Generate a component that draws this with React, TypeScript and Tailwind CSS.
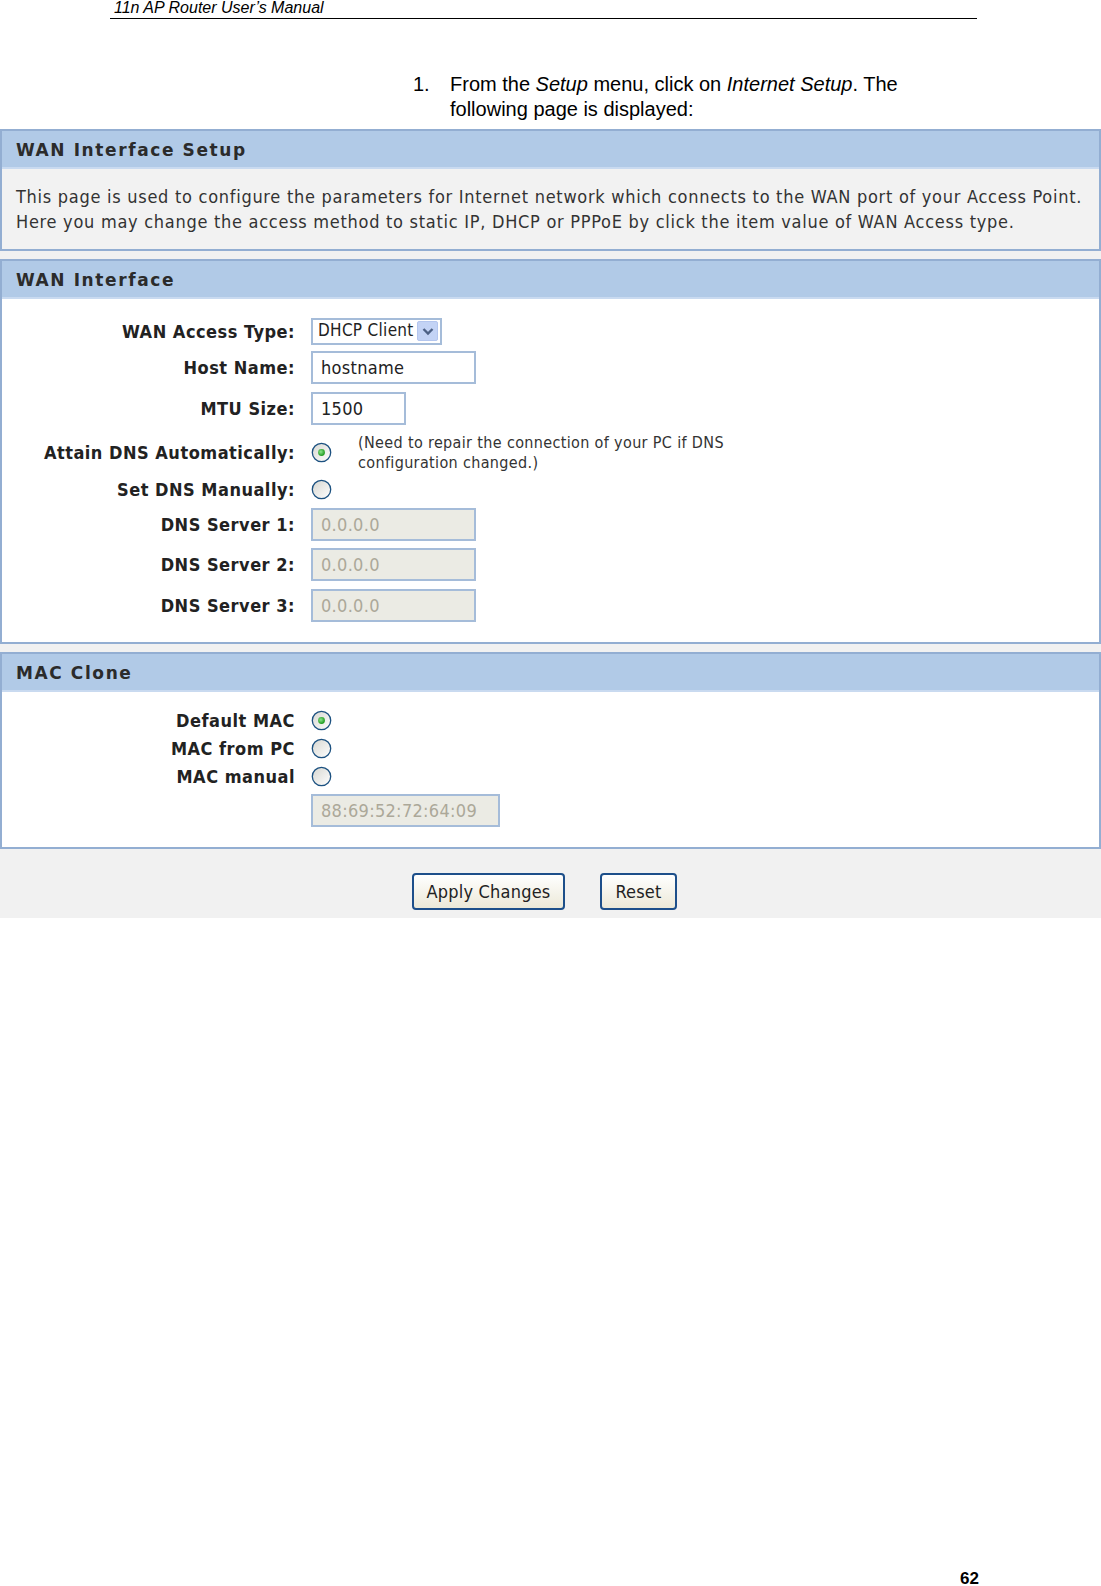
import React from "react";

const ui = "font-['DejaVu_Sans_Condensed','DejaVu_Sans',sans-serif]";

function Radio({ checked = false }: { checked?: boolean }) {
  return (
    <svg width="21" height="21" viewBox="0 0 21 21" className="shrink-0">
      <defs>
        <linearGradient id="rg" x1="0" y1="0" x2="1" y2="1">
          <stop offset="0" stopColor="#d6d6d0" />
          <stop offset="1" stopColor="#ffffff" />
        </linearGradient>
        <radialGradient id="dot" cx="0.4" cy="0.4" r="0.6">
          <stop offset="0" stopColor="#8ce58c" />
          <stop offset="1" stopColor="#1f9a1f" />
        </radialGradient>
      </defs>
      <circle cx="10.5" cy="10.5" r="9.2" fill="url(#rg)" stroke="#1c5180" strokeWidth="1.3" />
      {checked && <circle cx="10.5" cy="10.5" r="3.4" fill="url(#dot)" />}
    </svg>
  );
}

function TextBox({
  value,
  width,
  disabled = false,
}: {
  value: string;
  width: string;
  disabled?: boolean;
}) {
  return (
    <div
      className={`${width} h-[33px] flex items-center px-[8px] border-2 border-[#a5bcd9] text-[18px] tracking-[0.3px] ${
        disabled ? "bg-[#ebebe4] text-[#aca899]" : "bg-white text-[#222]"
      }`}
    >
      {value}
    </div>
  );
}

function Section({
  title,
  children,
  body,
}: {
  title: string;
  children: React.ReactNode;
  body: string;
}) {
  return (
    <div className="border-2 border-[#93aed2]">
      <div className="h-[38px] pt-[3px] flex items-center px-[14px] bg-[#b1cae7] border-b-2 border-[#c9daf0] font-['DejaVu_Sans',sans-serif] font-bold text-[17px] tracking-[1.6px] text-[#2b2b2b]">
        {title}
      </div>
      <div className={body}>{children}</div>
    </div>
  );
}

function Row({
  label,
  h,
  children,
}: {
  label: string;
  h: string;
  children?: React.ReactNode;
}) {
  return (
    <div className={`flex items-center ${h}`}>
      <div className="w-[293px] text-right font-bold text-[18px] tracking-[0.5px] text-[#222]">{label}</div>
      <div className="pl-[16px] flex items-center">{children}</div>
    </div>
  );
}

export default function App() {
  return (
    <div className="w-[1101px] h-[1586px] bg-white flex flex-col">
      {/* manual page header */}
      <div className="ml-[110px] w-[867px] border-b border-black pl-[4px] pb-[2px] h-[19px] font-['Liberation_Sans',Arial,sans-serif] italic text-[16px] leading-[15px] text-black">
        11n AP Router User’s Manual
      </div>

      <div className="mt-[53px] ml-[413px] flex font-['Liberation_Sans',Arial,sans-serif] text-[20px] leading-[25px] text-black">
        <span className="w-[37px]">1.</span>
        <span>
          From the <i>Setup</i> menu, click on <i>Internet Setup</i>. The
          <br />
          following page is displayed:
        </span>
      </div>

      {/* router web ui capture */}
      <div className={`mt-[7px] bg-[#f1f1f1] ${ui}`}>
        <Section title="WAN Interface Setup" body="bg-[#f2f2f2] px-[14px] pt-[15px] pb-[15px] text-[18px] tracking-[0.72px] leading-[25px] text-[#333]">
          This page is used to configure the parameters for Internet network which connects to the WAN port of your Access Point.
          <br />
          Here you may change the access method to static IP, DHCP or PPPoE by click the item value of WAN Access type.
        </Section>

        <div className="h-[8px]" />

        <Section title="WAN Interface" body="bg-white pt-[14px] pb-[16px]">
          <Row label="WAN Access Type:" h="h-[36px]">
            <div className="w-[131px] h-[27px] flex items-center border-2 border-[#a5bcd9] bg-white pl-[5px] pr-[2px] text-[17px] tracking-[0.3px] text-[#222]">
              <span className="flex-1">DHCP Client</span>
              <span className="w-[21px] h-[20px] flex items-center justify-center rounded-[2px] bg-[#c3d3f5] border border-[#b4c6ee]">
                <svg width="12" height="9" viewBox="0 0 12 9">
                  <path d="M1.5 2 L6 6.5 L10.5 2" fill="none" stroke="#4d6185" strokeWidth="2.4" />
                </svg>
              </span>
            </div>
          </Row>
          <Row label="Host Name:" h="h-[37px]">
            <TextBox value="hostname" width="w-[165px]" />
          </Row>
          <Row label="MTU Size:" h="h-[44px]">
            <TextBox value="1500" width="w-[95px]" />
          </Row>
          <Row label="Attain DNS Automatically:" h="h-[45px]">
            <Radio checked />
            <div className="pl-[26px] text-[16px] tracking-[0.35px] leading-[20px] text-[#333]">
              (Need to repair the connection of your PC if DNS
              <br />
              configuration changed.)
            </div>
          </Row>
          <Row label="Set DNS Manually:" h="h-[28px]">
            <Radio />
          </Row>
          <Row label="DNS Server 1:" h="h-[42px]">
            <TextBox value="0.0.0.0" width="w-[165px]" disabled />
          </Row>
          <Row label="DNS Server 2:" h="h-[39px]">
            <TextBox value="0.0.0.0" width="w-[165px]" disabled />
          </Row>
          <Row label="DNS Server 3:" h="h-[42px]">
            <TextBox value="0.0.0.0" width="w-[165px]" disabled />
          </Row>
        </Section>

        <div className="h-[8px]" />

        <Section title="MAC Clone" body="bg-white pt-[14px] pb-[20px]">
          <Row label="Default MAC" h="h-[28px]">
            <Radio checked />
          </Row>
          <Row label="MAC from PC" h="h-[28px]">
            <Radio />
          </Row>
          <Row label="MAC manual" h="h-[28px]">
            <Radio />
          </Row>
          <div className="mt-[4px] pl-[309px]">
            <TextBox value="88:69:52:72:64:09" width="w-[189px]" disabled />
          </div>
        </Section>

        <div className="h-[69px] pt-[24px] pl-[412px] flex gap-[35px]">
          <button className="w-[153px] h-[37px] rounded-[4px] border-2 border-[#1d4f8a] bg-gradient-to-b from-white to-[#ece9d8] text-[18px] tracking-[0.2px] text-[#222]">
            Apply Changes
          </button>
          <button className="w-[77px] h-[37px] rounded-[4px] border-2 border-[#1d4f8a] bg-gradient-to-b from-white to-[#ece9d8] text-[18px] tracking-[0.2px] text-[#222]">
            Reset
          </button>
        </div>
      </div>

      <div className="mt-auto mb-[-2px] ml-[960px] font-['Liberation_Sans',Arial,sans-serif] font-bold text-[17px] leading-[18px] text-black">
        62
      </div>
    </div>
  );
}
